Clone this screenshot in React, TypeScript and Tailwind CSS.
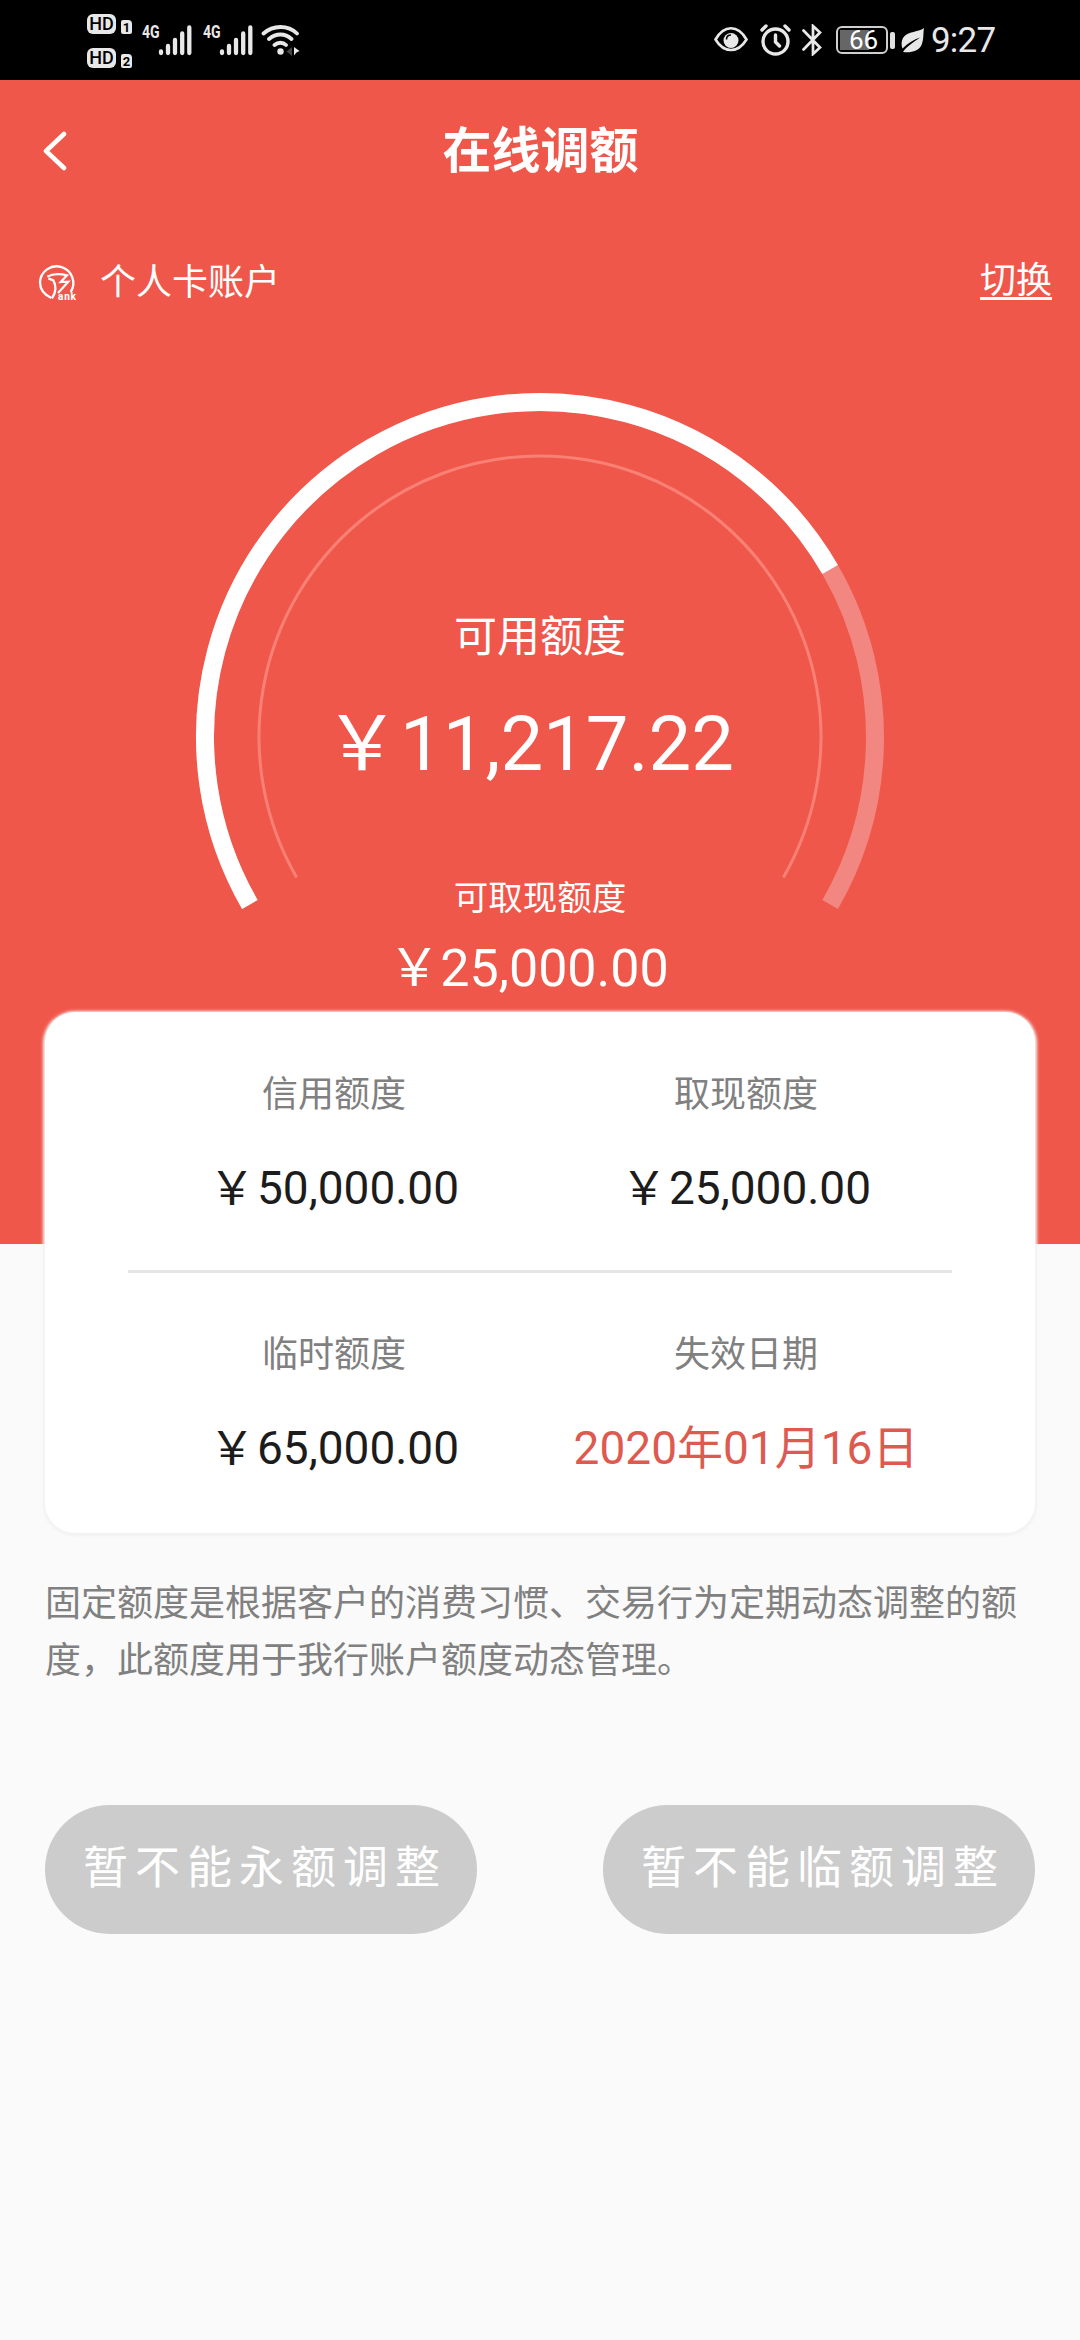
import React from "react";

const Signal = () => (
  <svg width="34" height="32" viewBox="0 0 34 32" stroke="#e8e8e8" strokeWidth="4.3" strokeLinecap="round">
    <path d="M3 27.5v1.5M10 22v7M17 16v13M24.2 9.500v19.5M31.300 3.500v25.500" />
  </svg>
);

const HdBadge = ({ n }: { n: string }) => (
  <div className="flex h-[20px] items-end gap-[5px]">
    <span className="flex h-[20px] w-[29px] items-center justify-center rounded-[6px] bg-[#e8e8e8] text-[18px] font-medium leading-none text-black">HD</span>
    <span className="flex h-[14px] w-[11px] items-center justify-center rounded-[2px] rounded-tr-[4px] bg-[#e8e8e8] text-[13px] font-bold leading-none text-black">{n}</span>
  </div>
);

const StatusBar = () => (
  <div className="flex h-[80px] w-full items-start bg-black text-[#e8e8e8]">
    <div className="ml-[87px] mt-[14px] flex w-[45px] flex-col gap-[14px]">
      <HdBadge n="1" />
      <HdBadge n="2" />
    </div>
    {[0, 1].map((i) => (
      <div key={i} className={i ? "ml-[11px] mt-[24px] flex" : "ml-[10px] mt-[24px] flex"}>
        <span className="w-[16px] origin-left scale-x-[0.78] text-[18px] font-bold leading-[16px]">4G</span>
        <Signal />
      </div>
    ))}
    <svg className="ml-[8px] mt-[24px]" width="40" height="32" viewBox="0 0 40 32" fill="none" stroke="#e8e8e8" strokeWidth="3.800" strokeLinecap="round">
      <path d="M2.500 9.500C12 0.800 27 0.800 36 9.500M8 15C15 9 24 9 30.500 15M13.500 21C17 18 22 18 25 21" />
      <circle cx="19.500" cy="27.500" r="3.200" fill="#e8e8e8" stroke="none" />
      <path d="M31 23v9l-5.500-4.500z" fill="#444" stroke="none" />
      <path d="M33 23l5.500 4-3 1.500-2.500 3z" fill="#e8e8e8" stroke="none" />
    </svg>
    <div className="ml-auto mr-[86px] mt-[22px] flex h-[36px] items-center">
      <svg width="34" height="28" viewBox="0 0 34 28" fill="none" stroke="#e8e8e8" strokeWidth="2.600">
        <path d="M1.500 13.500C10-1.500 24-1.500 32.500 13.500C24 27.500 10 27.500 1.500 13.500Z" />
        <circle cx="17" cy="14.500" r="7.500" fill="#e8e8e8" stroke="none" />
        <path d="M12.500 13.500c0-3 2-4.500 4.500-4.500" stroke="#000" strokeWidth="1.600" />
      </svg>
      <svg className="ml-[12px]" width="31" height="32" viewBox="0 0 31 32" fill="none" stroke="#e8e8e8" strokeWidth="3.400" strokeLinecap="round">
        <circle cx="15.500" cy="17.500" r="12.500" />
        <path d="M2 6l4-4M29 6l-4-4M15.500 11v7l4 4" />
      </svg>
      <svg className="ml-[11px]" width="20" height="32" viewBox="0 0 20 32" fill="none" stroke="#e8e8e8" strokeWidth="2.700">
        <path d="M1.500 6.500L18 23.500L11 30V2L18 8.500L1.500 25.500" strokeLinecap="round" />
      </svg>
      <div className="ml-[14px] flex h-[28px] w-[52px] items-center rounded-[6px] border-[2px] border-[#cfcfcf] p-[2px]">
        <div className="flex h-full w-[29px] items-center bg-[#666]">
          <span className="ml-[9px] text-[26px] leading-none text-white">66</span>
        </div>
      </div>
      <div className="ml-[2px] h-[17px] w-[5px] rounded-[2px] bg-[#e0e0e0]" />
      <svg className="ml-[6px]" width="24" height="25" viewBox="0 0 24 25">
        <path d="M23 0C19 4 6 3 2 10C0 14 0.500 18 1.500 20.500C7 15 13 11.500 19 9.500C13 14 6 18 2 24C10 25 18 23 20.500 17C23 11 22 6 23 0Z" fill="#e8e8e8" />
      </svg>
      <span className="ml-[6px] w-[63px] pt-[2px] text-[35px] leading-[36px] tracking-[-0.800px]">9:27</span>
    </div>
  </div>
);

const BankLogo = () => (
  <svg width="40" height="38" viewBox="24 24 120 114" fill="none" stroke="#fff">
    <path d="M64 129C42 119 30 102 30 82A50 50 0 1 1 122 111" strokeWidth="7" />
    <path d="M52 65C70 55 90 56 111 61L92 81L115 80L84 114" strokeWidth="6.500" />
    <path d="M55 70L70 76C79 92 78 112 66 130" strokeWidth="7" />
    <text x="84" y="135" fontSize="30" fontWeight="800" fill="#fff" stroke="none" fontFamily="Roboto" textLength="54">ank</text>
  </svg>
);

const Gauge = () => (
  <svg className="absolute left-[190px] top-[303px]" width="700" height="530" viewBox="190 383 700 530" fill="none">
    <path d="M249.880 904.500A335 335 0 1 1 830.120 904.500" stroke="#f18780" strokeWidth="18" />
    <path d="M249.880 904.500A335 335 0 0 1 830.120 569.500" stroke="#fff" strokeWidth="18" />
    <path d="M296.650 877.500A281 281 0 1 1 783.350 877.500" stroke="#f98075" strokeWidth="3" />
  </svg>
);

type CellProps = { label: string; value: string; accent?: boolean };

const Cell = ({ label, value, accent }: CellProps) => (
  <div className="flex flex-col items-center">
    <div className="text-[36px] leading-[54px] text-[#808080]">{label}</div>
    <div className={accent ? "mt-[36px] whitespace-nowrap text-[46px] leading-[60px] text-[#dd5a50]" : "mt-[36px] whitespace-nowrap text-[46px] leading-[60px] text-[#1c1c1c]"}>
      {accent ? value : <><span className="mr-[2px]">￥</span>{value}</>}
    </div>
  </div>
);

const PillButton = ({ children }: { children: string }) => (
  <button className="h-[129px] w-[432px] rounded-full bg-[#cccccc] pb-[1px] pl-[8px] text-[45px] leading-[66px] tracking-[7px] text-white">{children}</button>
);

export default function App() {
  return (
    <div className="h-[2340px] w-[1080px] overflow-hidden bg-[#fafafa] font-['Roboto','Noto_Sans_CJK_SC',sans-serif]">
      <StatusBar />
      <div className="relative h-[1164px] bg-[#f0574b] text-white">
        <div className="flex h-[140px] items-center justify-center">
          <svg className="absolute left-[42px] top-[51px]" width="26" height="40" viewBox="0 0 26 40" fill="none" stroke="#fff" strokeWidth="4.500" strokeLinecap="round" strokeLinejoin="round">
            <path d="M22 3L4 20L22 37" />
          </svg>
          <h1 className="pl-[1px] pt-[3px] text-[49px] font-bold leading-[70px]">在线调额</h1>
        </div>
        <div className="flex h-[124px] items-center pl-[38px] pr-[28px]">
          <BankLogo />
          <span className="ml-[22px] pt-[2px] text-[36px]">个人卡账户</span>
          <span className="ml-auto border-b-[3px] border-white text-[36px] leading-[32px]">切换</span>
        </div>
        <Gauge />
        <div className="relative flex flex-col items-center">
          <div className="mt-[263px] text-[43px] leading-[60px]">可用额度</div>
          <div className="mt-[32px] whitespace-nowrap pr-[22px] text-[76px] leading-[90px]">￥11,217.22</div>
          <div className="mt-[83px] text-[34.500px] leading-[52px]">可取现额度</div>
          <div className="mt-[15px] whitespace-nowrap pr-[23px] text-[52px] leading-[60px]">￥25,000.00</div>
        </div>
      </div>
      <div className="relative mx-[45px] -mt-[232px] h-[521px] rounded-[30px] bg-white px-[83px] pt-[56px] shadow-[0_1px_3px_2px_#f2f2f2]">
        <div className="grid h-[202px] grid-cols-2">
          <Cell label="信用额度" value="50,000.00" />
          <Cell label="取现额度" value="25,000.00" />
        </div>
        <div className="h-[3px] bg-[#e5e5e5]" />
        <div className="mt-[55px] grid grid-cols-2">
          <Cell label="临时额度" value="65,000.00" />
          <Cell label="失效日期" value="2020年01月16日" accent />
        </div>
      </div>
      <p className="mx-[45px] mt-[43px] text-[36px] leading-[57px] text-[#808080]">
        固定额度是根据客户的消费习惯、交易行为定期动态调整的额度，此额度用于我行账户额度动态管理。
      </p>
      <div className="mx-[45px] mt-[115px] flex justify-between">
        <PillButton>暂不能永额调整</PillButton>
        <PillButton>暂不能临额调整</PillButton>
      </div>
    </div>
  );
}
